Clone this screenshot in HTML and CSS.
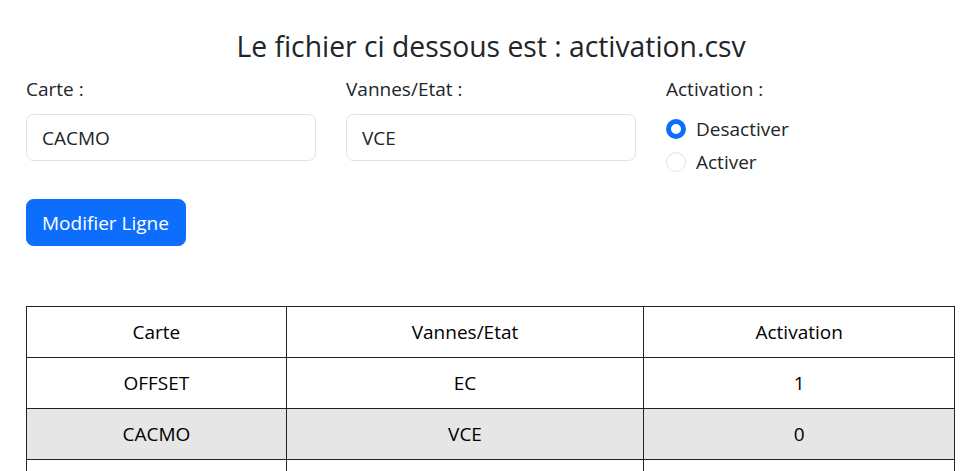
FILE: index.html
```html
<!DOCTYPE html>
<html lang="fr">
<head>
<meta charset="utf-8">
<title>activation.csv</title>
<link rel="stylesheet" href="styles.css">
</head>
<body>
<main class="page">
  <h3 class="title">Le fichier ci dessous est : activation.csv</h3>
  <form class="form">
    <div class="fields">
      <div class="field">
        <label class="label" for="carte">Carte :</label>
        <input class="input" id="carte" type="text" value="CACMO">
      </div>
      <div class="field">
        <label class="label" for="vannes">Vannes/Etat :</label>
        <input class="input" id="vannes" type="text" value="VCE">
      </div>
      <div class="field">
        <div class="label">Activation :</div>
        <label class="check">
          <span class="radio checked"></span>
          <span>Desactiver</span>
        </label>
        <label class="check">
          <span class="radio"></span>
          <span>Activer</span>
        </label>
      </div>
    </div>
    <button class="btn" type="button">Modifier Ligne</button>
  </form>
  <table class="table">
    <colgroup>
      <col class="c1"><col class="c2"><col class="c3">
    </colgroup>
    <thead>
      <tr><th>Carte</th><th>Vannes/Etat</th><th>Activation</th></tr>
    </thead>
    <tbody>
      <tr><td>OFFSET</td><td>EC</td><td>1</td></tr>
      <tr><td>CACMO</td><td>VCE</td><td>0</td></tr>
      <tr><td></td><td></td><td></td></tr>
    </tbody>
  </table>
</main>
</body>
</html>
```

FILE: styles.css
```css
* { box-sizing: border-box; }
html, body { margin: 0; padding: 0; background: #fff; }
body {
  font-family: "Open Sans", "Noto Sans", sans-serif;
  font-size: 19px;
  line-height: 30px;
  color: #212529;
  overflow: hidden;
}
.page {
  padding: 0 5px 0 26px;
}
.title {
  margin: 0;
  padding-top: 28px;
  height: 74px;
  font-size: 28.3px;
  line-height: 36px;
  font-weight: 400;
  text-align: center;
}
.form { margin: 0; }
.fields {
  display: grid;
  grid-template-columns: 290px 290px 290px;
  column-gap: 30px;
}
.label {
  display: block;
  height: 30px;
  margin-bottom: 10px;
}
.input {
  display: block;
  width: 100%;
  height: 47px;
  padding: 7px 15px;
  font: inherit;
  color: #212529;
  background: #fff;
  border: 1px solid #dee2e6;
  border-radius: 7.5px;
  outline: none;
}
.check {
  display: flex;
  align-items: center;
  gap: 10px;
  height: 30px;
  margin-bottom: 2.5px;
}
.radio {
  width: 20px;
  height: 20px;
  border-radius: 50%;
  border: 1px solid #dee2e6;
  background: #fff;
  flex: none;
}
.radio.checked {
  border: 5px solid #0d6efd;
  background: #fff;
}
.btn {
  display: block;
  margin-top: 20px;
  width: 160px;
  height: 47px;
  padding: 7px 15px;
  font: inherit;
  color: #fff;
  background: #0d6efd;
  border: 1px solid #0d6efd;
  border-radius: 7.5px;
  text-align: left;
}
.table {
  margin-top: 60px;
  width: 929px;
  border-collapse: collapse;
  color: #000;
}
.c1 { width: 260px; }
.c2 { width: 358px; }
.c3 { width: 311px; }
.table th, .table td {
  border: 1px solid #222;
  padding: 10px;
  height: 51px;
  font-weight: 400;
  text-align: center;
}
.table tbody tr:nth-child(even) { background: #e6e6e6; }
```
